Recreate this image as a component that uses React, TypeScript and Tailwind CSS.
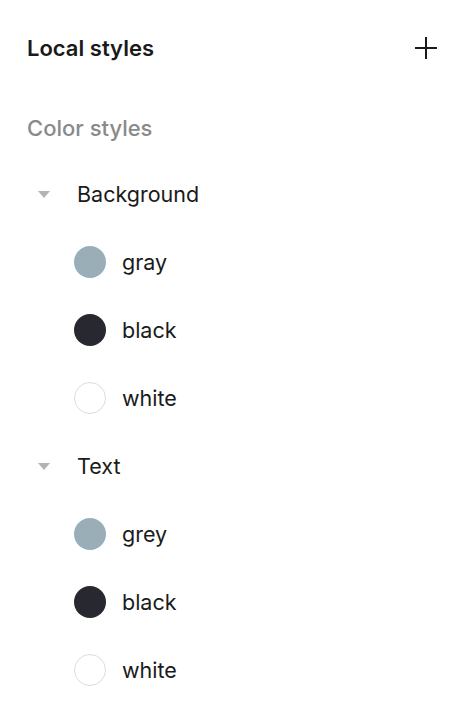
import { ReactNode } from "react";

type Swatch = { name: string; color: string; border?: boolean };

const groups: { title: string; swatches: Swatch[] }[] = [
  {
    title: "Background",
    swatches: [
      { name: "gray", color: "bg-[#9aaeb8]" },
      { name: "black", color: "bg-[#272830]" },
      { name: "white", color: "bg-white", border: true },
    ],
  },
  {
    title: "Text",
    swatches: [
      { name: "grey", color: "bg-[#9aaeb8]" },
      { name: "black", color: "bg-[#272830]" },
      { name: "white", color: "bg-white", border: true },
    ],
  },
];

function Row({ children, className = "" }: { children: ReactNode; className?: string }) {
  return <div className={`flex h-[68px] items-center ${className}`}>{children}</div>;
}

export default function App() {
  return (
    <div className="min-h-screen w-full bg-white font-['Inter',sans-serif] text-[#1a1a1a]">
      <div className="flex h-[96px] items-center justify-between pl-[27px] pr-[37px]">
        <h1 className="text-[22px] font-semibold">Local styles</h1>
        <button className="flex h-[22px] w-[22px] items-center justify-center">
          <svg width="22" height="22" viewBox="0 0 22 22" fill="none">
            <path d="M11 0v22M0 11h22" stroke="#1a1a1a" strokeWidth="2" />
          </svg>
        </button>
      </div>

      <div className="flex h-[64px] items-center pl-[27px] text-[22px] font-medium text-[#8a8a8a]">
        Color styles
      </div>

      {groups.map((group) => (
        <div key={group.title}>
          <Row>
            <div className="flex w-[77px] justify-start pl-[38px]">
              <svg width="12" height="7" viewBox="0 0 12 7">
                <path d="M0 0h12L6 7z" fill="#b3b3b3" />
              </svg>
            </div>
            <span className="text-[21.5px]">{group.title}</span>
          </Row>
          {group.swatches.map((s) => (
            <Row key={group.title + s.name} className="pl-[74px]">
              <div
                className={`h-[32px] w-[32px] rounded-full ${s.color} ${s.border ? "border border-[#dcdcdc]" : ""}`}
              />
              <span className="ml-[16px] text-[21.5px]">{s.name}</span>
            </Row>
          ))}
        </div>
      ))}
    </div>
  );
}
